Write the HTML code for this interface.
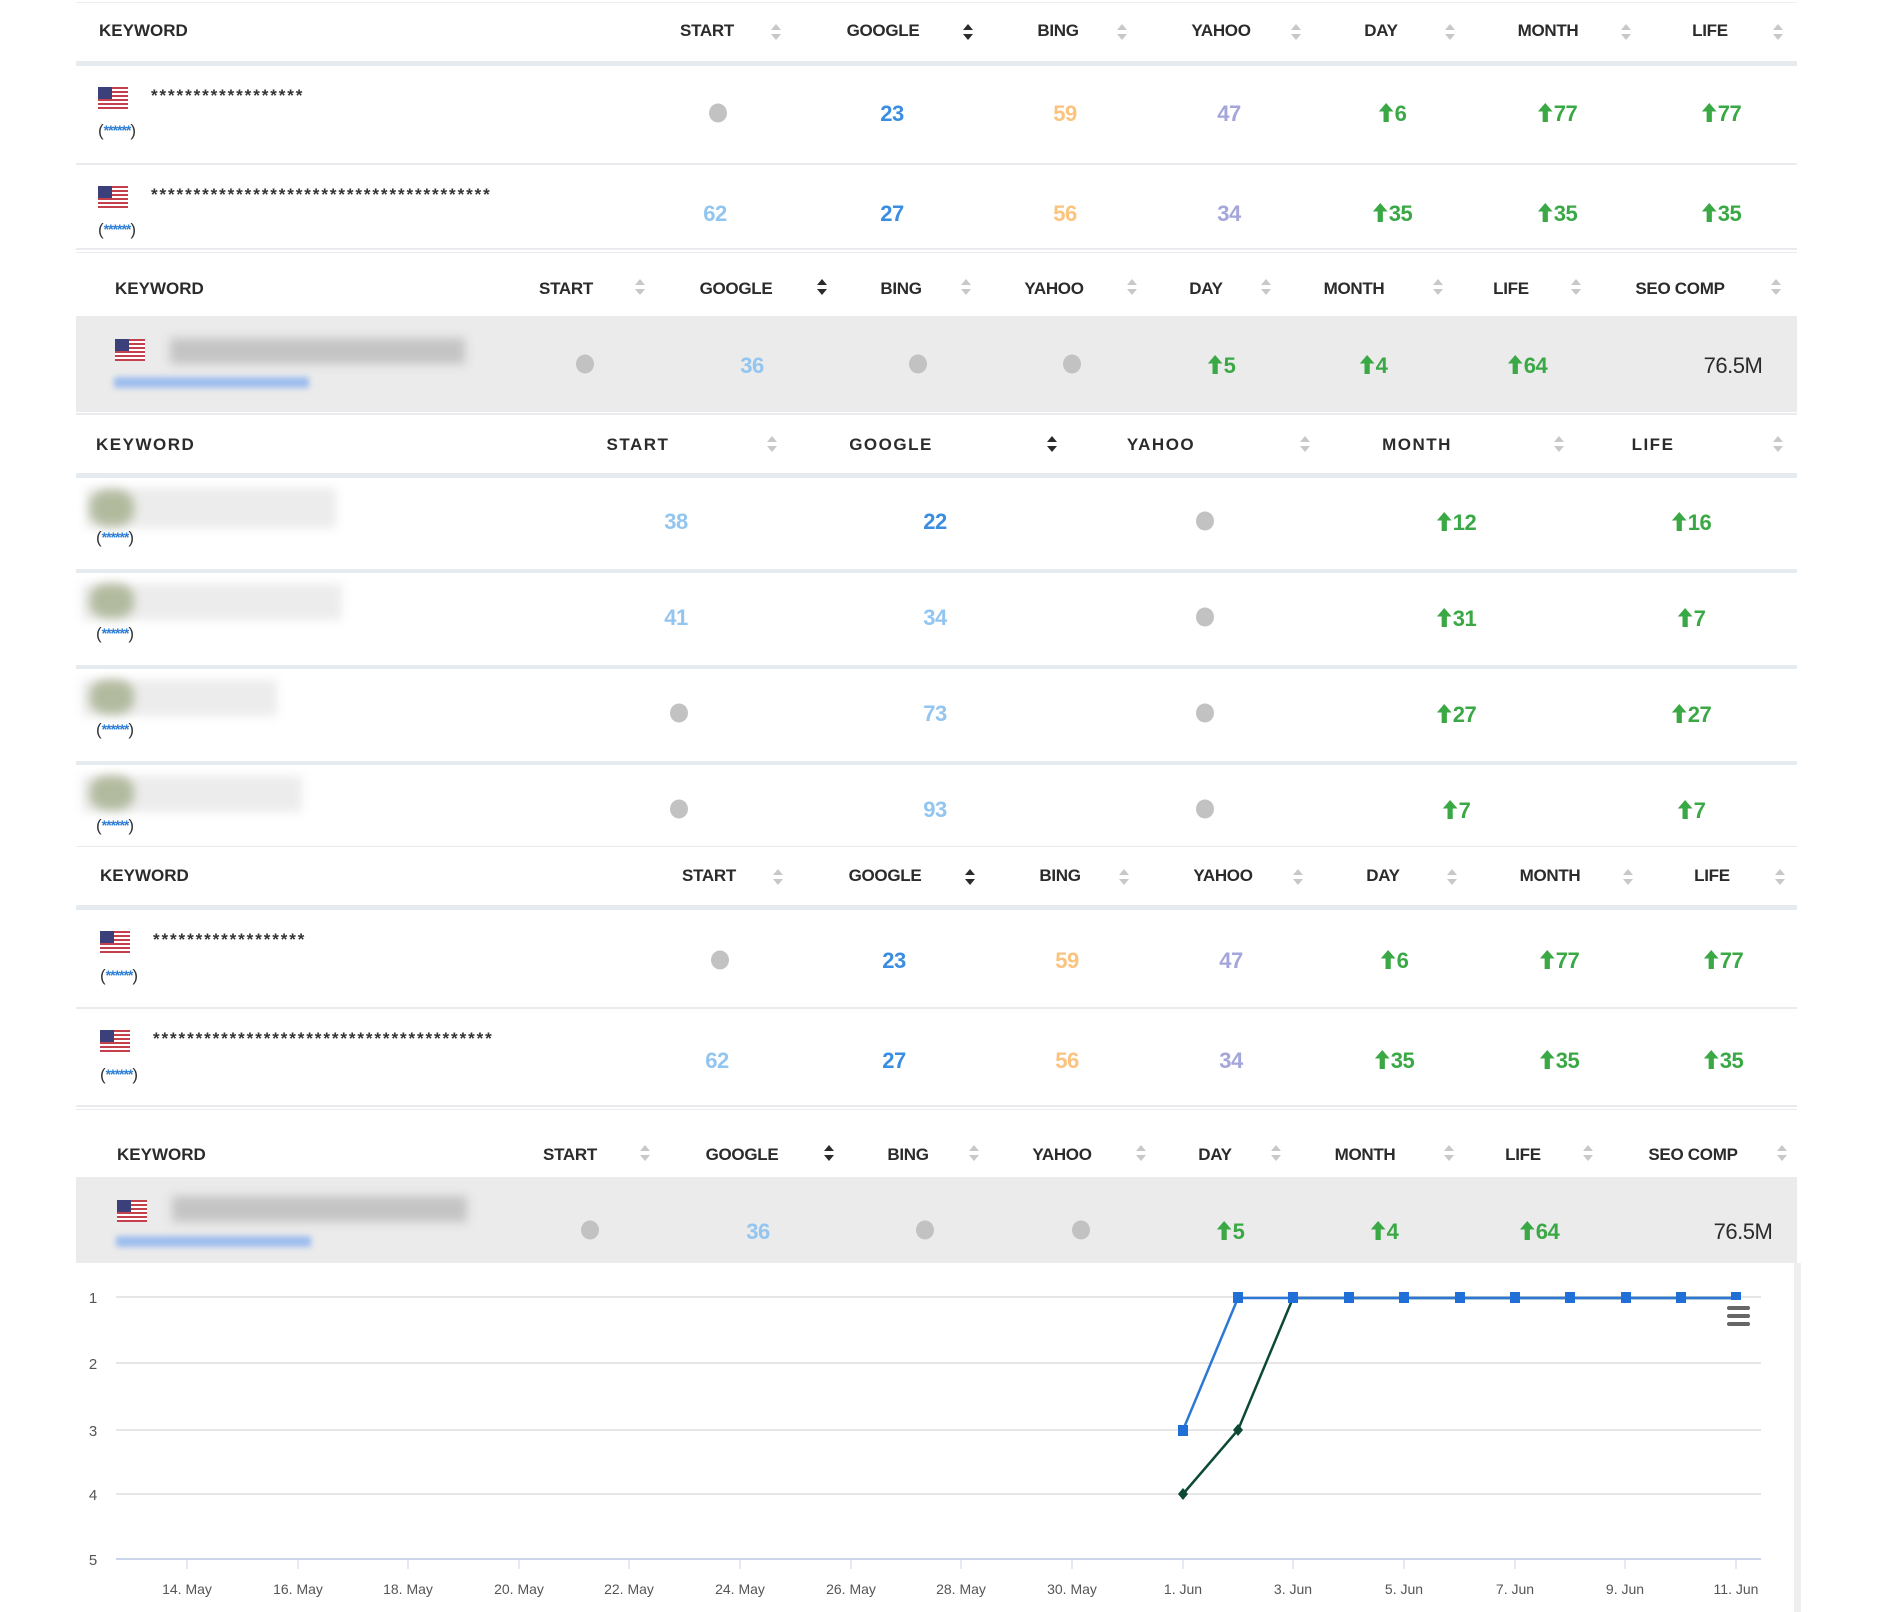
<!DOCTYPE html>
<html><head><meta charset="utf-8"><style>
*{margin:0;padding:0;box-sizing:border-box}
body{width:1882px;height:1612px;background:#fff;position:relative;overflow:hidden;font-family:"Liberation Sans",sans-serif;color:#333}
.a{position:absolute}
.h{position:absolute;transform:translate(-50%,-50%);font-weight:bold;font-size:17px;color:#2b2b2b;white-space:nowrap;letter-spacing:-0.3px}
.hk{position:absolute;transform:translateY(-50%);font-weight:bold;font-size:17px;color:#2b2b2b}
.n{position:absolute;transform:translate(-50%,-50%);font-weight:bold;font-size:22px;white-space:nowrap;letter-spacing:-0.5px;margin-left:-3px}
.g{color:#3aa845}.b1{color:#3a8de0}.b2{color:#92c5ef}.o{color:#fbc37d}.p{color:#a4a6db}
.d{position:absolute;width:18px;height:19px;border-radius:50%;background:#c2c2c2;transform:translate(-50%,-50%)}
.s{position:absolute;transform:translate(-50%,-50%);width:10px;height:16px}
.s:before{content:"";position:absolute;left:0;top:0;border-left:5px solid transparent;border-right:5px solid transparent;border-bottom:6px solid #c8c8c8}
.s:after{content:"";position:absolute;left:0;bottom:0;border-left:5px solid transparent;border-right:5px solid transparent;border-top:6px solid #c8c8c8}
.s.k:before{border-bottom-color:#2b2b2b}.s.k:after{border-top-color:#2b2b2b}
.line{position:absolute;left:76px;width:1721px;height:2px;background:#e9ebee}
.hl{position:absolute;left:76px;width:1721px;height:5px;background:#e6ebf0}
.ast{position:absolute;font-weight:bold;font-size:17px;letter-spacing:1.9px;color:#333;transform:translateY(-40%)}
.par{position:absolute;font-size:17px;color:#333;transform:translateY(-50%)}
.par span{color:#2f7fd4;font-size:14px;font-weight:bold;letter-spacing:-1px;vertical-align:1px}
.fl{position:absolute;width:30px;height:22px}
.gray{position:absolute;left:76px;width:1721px;background:#ebebeb}
.blur{position:absolute;filter:blur(5px)}
</style></head><body>

<svg width="0" height="0" style="position:absolute"><defs>
<symbol id="f" viewBox="0 0 30 22"><rect width="30" height="22" fill="#fff"/>
<g fill="#c4404c"><rect y="0" width="30" height="2"/><rect y="4" width="30" height="2"/><rect y="8" width="30" height="2"/><rect y="12" width="30" height="2"/><rect y="16" width="30" height="2"/><rect y="20" width="30" height="2"/></g>
<rect width="14" height="12" fill="#3b3f7a"/></symbol>
<symbol id="u" viewBox="0 0 16 20"><path d="M8 1 L15 9 L10.5 9 L10.5 19 L5.5 19 L5.5 9 L1 9 Z" fill="#3aa845"/></symbol>
</defs></svg>

<!-- ============ TABLE 1 ============ -->
<div class="a" style="left:76px;top:2px;width:1721px;height:1px;background:#eee"></div>
<div class="hk" style="left:99px;top:31px">KEYWORD</div>
<div class="h" style="left:707px;top:31px">START</div><div class="s" style="left:776px;top:32px"></div>
<div class="h" style="left:883px;top:31px">GOOGLE</div><div class="s k" style="left:968px;top:32px"></div>
<div class="h" style="left:1058px;top:31px">BING</div><div class="s" style="left:1122px;top:32px"></div>
<div class="h" style="left:1221px;top:31px">YAHOO</div><div class="s" style="left:1296px;top:32px"></div>
<div class="h" style="left:1381px;top:31px">DAY</div><div class="s" style="left:1450px;top:32px"></div>
<div class="h" style="left:1548px;top:31px">MONTH</div><div class="s" style="left:1626px;top:32px"></div>
<div class="h" style="left:1710px;top:31px">LIFE</div><div class="s" style="left:1778px;top:32px"></div>
<div class="hl" style="top:61px"></div>

<svg class="fl" style="left:98px;top:87px"><use href="#f"/></svg>
<div class="ast" style="left:151px;top:94px">******************</div>
<div class="par" style="left:98px;top:131px">(<span>******</span>)</div>
<div class="d" style="left:718px;top:113px"></div>
<div class="n b1" style="left:895px;top:114px">23</div>
<div class="n o" style="left:1068px;top:114px">59</div>
<div class="n p" style="left:1232px;top:114px">47</div>
<div class="n g" style="left:1395px;top:114px"><svg width="17" height="21" style="vertical-align:-2px"><use href="#u"/></svg>6</div>
<div class="n g" style="left:1560px;top:114px"><svg width="17" height="21" style="vertical-align:-2px"><use href="#u"/></svg>77</div>
<div class="n g" style="left:1724px;top:114px"><svg width="17" height="21" style="vertical-align:-2px"><use href="#u"/></svg>77</div>
<div class="line" style="top:163px"></div>

<svg class="fl" style="left:98px;top:186px"><use href="#f"/></svg>
<div class="ast" style="left:151px;top:193px">****************************************</div>
<div class="par" style="left:98px;top:230px">(<span>******</span>)</div>
<div class="n b2" style="left:718px;top:214px">62</div>
<div class="n b1" style="left:895px;top:214px">27</div>
<div class="n o" style="left:1068px;top:214px">56</div>
<div class="n p" style="left:1232px;top:214px">34</div>
<div class="n g" style="left:1395px;top:214px"><svg width="17" height="21" style="vertical-align:-2px"><use href="#u"/></svg>35</div>
<div class="n g" style="left:1560px;top:214px"><svg width="17" height="21" style="vertical-align:-2px"><use href="#u"/></svg>35</div>
<div class="n g" style="left:1724px;top:214px"><svg width="17" height="21" style="vertical-align:-2px"><use href="#u"/></svg>35</div>
<div class="line" style="top:248px"></div>
<div class="line" style="top:252px;height:1px"></div>

<!-- ============ TABLE 2 ============ -->
<div class="hk" style="left:115px;top:289px">KEYWORD</div>
<div class="h" style="left:566px;top:289px">START</div><div class="s" style="left:640px;top:287px"></div>
<div class="h" style="left:736px;top:289px">GOOGLE</div><div class="s k" style="left:822px;top:287px"></div>
<div class="h" style="left:901px;top:289px">BING</div><div class="s" style="left:966px;top:287px"></div>
<div class="h" style="left:1054px;top:289px">YAHOO</div><div class="s" style="left:1132px;top:287px"></div>
<div class="h" style="left:1206px;top:289px">DAY</div><div class="s" style="left:1266px;top:287px"></div>
<div class="h" style="left:1354px;top:289px">MONTH</div><div class="s" style="left:1438px;top:287px"></div>
<div class="h" style="left:1511px;top:289px">LIFE</div><div class="s" style="left:1576px;top:287px"></div>
<div class="h" style="left:1680px;top:289px">SEO COMP</div><div class="s" style="left:1776px;top:287px"></div>
<div class="gray" style="top:316px;height:96px"></div>
<svg class="fl" style="left:115px;top:339px"><use href="#f"/></svg>
<div class="blur" style="left:170px;top:338px;width:295px;height:26px;background:#c4c4c4"></div>
<div class="blur" style="left:114px;top:377px;width:195px;height:11px;background:#9dbdee;filter:blur(3px)"></div>
<div class="d" style="left:585px;top:364px"></div>
<div class="n b2" style="left:755px;top:366px">36</div>
<div class="d" style="left:918px;top:364px"></div>
<div class="d" style="left:1072px;top:364px"></div>
<div class="n g" style="left:1224px;top:366px"><svg width="17" height="21" style="vertical-align:-2px"><use href="#u"/></svg>5</div>
<div class="n g" style="left:1376px;top:366px"><svg width="17" height="21" style="vertical-align:-2px"><use href="#u"/></svg>4</div>
<div class="n g" style="left:1530px;top:366px"><svg width="17" height="21" style="vertical-align:-2px"><use href="#u"/></svg>64</div>
<div class="n" style="left:1736px;top:366px;font-weight:normal;color:#2b2b2b">76.5M</div>
<div class="line" style="top:413px"></div>

<!-- ============ TABLE 3 ============ -->
<div class="hk" style="left:96px;top:445px;letter-spacing:1.5px">KEYWORD</div>
<div class="h" style="left:638px;top:445px;letter-spacing:1.5px">START</div><div class="s" style="left:772px;top:444px"></div>
<div class="h" style="left:891px;top:445px;letter-spacing:1.5px">GOOGLE</div><div class="s k" style="left:1052px;top:444px"></div>
<div class="h" style="left:1161px;top:445px;letter-spacing:1.5px">YAHOO</div><div class="s" style="left:1305px;top:444px"></div>
<div class="h" style="left:1417px;top:445px;letter-spacing:1.5px">MONTH</div><div class="s" style="left:1559px;top:444px"></div>
<div class="h" style="left:1653px;top:445px;letter-spacing:1.5px">LIFE</div><div class="s" style="left:1778px;top:444px"></div>
<div class="hl" style="top:473px"></div>

<div class="blur" style="left:86px;top:488px;width:250px;height:40px;background:#ececec"></div>
<div class="blur" style="left:90px;top:490px;width:44px;height:36px;background:#b2ba9e;border-radius:40%"></div>
<div class="par" style="left:96px;top:538px">(<span>******</span>)</div>
<div class="n b2" style="left:679px;top:522px">38</div>
<div class="n b1" style="left:938px;top:522px">22</div>
<div class="d" style="left:1205px;top:521px"></div>
<div class="n g" style="left:1459px;top:523px"><svg width="17" height="21" style="vertical-align:-2px"><use href="#u"/></svg>12</div>
<div class="n g" style="left:1694px;top:523px"><svg width="17" height="21" style="vertical-align:-2px"><use href="#u"/></svg>16</div>
<div class="hl" style="top:569px;height:4px"></div>

<div class="blur" style="left:82px;top:584px;width:260px;height:36px;background:#ececec"></div>
<div class="blur" style="left:90px;top:584px;width:44px;height:34px;background:#b2ba9e;border-radius:40%"></div>
<div class="par" style="left:96px;top:634px">(<span>******</span>)</div>
<div class="n b2" style="left:679px;top:618px">41</div>
<div class="n b2" style="left:938px;top:618px">34</div>
<div class="d" style="left:1205px;top:617px"></div>
<div class="n g" style="left:1459px;top:619px"><svg width="17" height="21" style="vertical-align:-2px"><use href="#u"/></svg>31</div>
<div class="n g" style="left:1694px;top:619px"><svg width="17" height="21" style="vertical-align:-2px"><use href="#u"/></svg>7</div>
<div class="hl" style="top:665px;height:4px"></div>

<div class="blur" style="left:82px;top:680px;width:195px;height:36px;background:#ececec"></div>
<div class="blur" style="left:90px;top:680px;width:44px;height:34px;background:#b2ba9e;border-radius:40%"></div>
<div class="par" style="left:96px;top:730px">(<span>******</span>)</div>
<div class="d" style="left:679px;top:713px"></div>
<div class="n b2" style="left:938px;top:714px">73</div>
<div class="d" style="left:1205px;top:713px"></div>
<div class="n g" style="left:1459px;top:715px"><svg width="17" height="21" style="vertical-align:-2px"><use href="#u"/></svg>27</div>
<div class="n g" style="left:1694px;top:715px"><svg width="17" height="21" style="vertical-align:-2px"><use href="#u"/></svg>27</div>
<div class="hl" style="top:761px;height:4px"></div>

<div class="blur" style="left:82px;top:776px;width:220px;height:36px;background:#ececec"></div>
<div class="blur" style="left:90px;top:776px;width:44px;height:34px;background:#b2ba9e;border-radius:40%"></div>
<div class="par" style="left:96px;top:826px">(<span>******</span>)</div>
<div class="d" style="left:679px;top:809px"></div>
<div class="n b2" style="left:938px;top:810px">93</div>
<div class="d" style="left:1205px;top:809px"></div>
<div class="n g" style="left:1459px;top:811px"><svg width="17" height="21" style="vertical-align:-2px"><use href="#u"/></svg>7</div>
<div class="n g" style="left:1694px;top:811px"><svg width="17" height="21" style="vertical-align:-2px"><use href="#u"/></svg>7</div>
<div class="line" style="top:846px;height:1px"></div>

<!-- ============ TABLE 4 ============ -->
<div class="hk" style="left:100px;top:876px">KEYWORD</div>
<div class="h" style="left:709px;top:876px">START</div><div class="s" style="left:778px;top:877px"></div>
<div class="h" style="left:885px;top:876px">GOOGLE</div><div class="s k" style="left:970px;top:877px"></div>
<div class="h" style="left:1060px;top:876px">BING</div><div class="s" style="left:1124px;top:877px"></div>
<div class="h" style="left:1223px;top:876px">YAHOO</div><div class="s" style="left:1298px;top:877px"></div>
<div class="h" style="left:1383px;top:876px">DAY</div><div class="s" style="left:1452px;top:877px"></div>
<div class="h" style="left:1550px;top:876px">MONTH</div><div class="s" style="left:1628px;top:877px"></div>
<div class="h" style="left:1712px;top:876px">LIFE</div><div class="s" style="left:1780px;top:877px"></div>
<div class="hl" style="top:905px"></div>

<svg class="fl" style="left:100px;top:931px"><use href="#f"/></svg>
<div class="ast" style="left:153px;top:938px">******************</div>
<div class="par" style="left:100px;top:976px">(<span>******</span>)</div>
<div class="d" style="left:720px;top:960px"></div>
<div class="n b1" style="left:897px;top:961px">23</div>
<div class="n o" style="left:1070px;top:961px">59</div>
<div class="n p" style="left:1234px;top:961px">47</div>
<div class="n g" style="left:1397px;top:961px"><svg width="17" height="21" style="vertical-align:-2px"><use href="#u"/></svg>6</div>
<div class="n g" style="left:1562px;top:961px"><svg width="17" height="21" style="vertical-align:-2px"><use href="#u"/></svg>77</div>
<div class="n g" style="left:1726px;top:961px"><svg width="17" height="21" style="vertical-align:-2px"><use href="#u"/></svg>77</div>
<div class="line" style="top:1007px"></div>

<svg class="fl" style="left:100px;top:1030px"><use href="#f"/></svg>
<div class="ast" style="left:153px;top:1037px">****************************************</div>
<div class="par" style="left:100px;top:1075px">(<span>******</span>)</div>
<div class="n b2" style="left:720px;top:1061px">62</div>
<div class="n b1" style="left:897px;top:1061px">27</div>
<div class="n o" style="left:1070px;top:1061px">56</div>
<div class="n p" style="left:1234px;top:1061px">34</div>
<div class="n g" style="left:1397px;top:1061px"><svg width="17" height="21" style="vertical-align:-2px"><use href="#u"/></svg>35</div>
<div class="n g" style="left:1562px;top:1061px"><svg width="17" height="21" style="vertical-align:-2px"><use href="#u"/></svg>35</div>
<div class="n g" style="left:1726px;top:1061px"><svg width="17" height="21" style="vertical-align:-2px"><use href="#u"/></svg>35</div>
<div class="line" style="top:1105px"></div>
<div class="line" style="top:1109px;height:1px"></div>

<!-- ============ TABLE 5 ============ -->
<div class="hk" style="left:117px;top:1155px">KEYWORD</div>
<div class="h" style="left:570px;top:1155px">START</div><div class="s" style="left:645px;top:1153px"></div>
<div class="h" style="left:742px;top:1155px">GOOGLE</div><div class="s k" style="left:829px;top:1153px"></div>
<div class="h" style="left:908px;top:1155px">BING</div><div class="s" style="left:974px;top:1153px"></div>
<div class="h" style="left:1062px;top:1155px">YAHOO</div><div class="s" style="left:1141px;top:1153px"></div>
<div class="h" style="left:1215px;top:1155px">DAY</div><div class="s" style="left:1276px;top:1153px"></div>
<div class="h" style="left:1365px;top:1155px">MONTH</div><div class="s" style="left:1449px;top:1153px"></div>
<div class="h" style="left:1523px;top:1155px">LIFE</div><div class="s" style="left:1588px;top:1153px"></div>
<div class="h" style="left:1693px;top:1155px">SEO COMP</div><div class="s" style="left:1782px;top:1153px"></div>
<div class="gray" style="top:1177px;height:86px"></div>
<svg class="fl" style="left:117px;top:1200px"><use href="#f"/></svg>
<div class="blur" style="left:172px;top:1196px;width:295px;height:26px;background:#c4c4c4"></div>
<div class="blur" style="left:116px;top:1236px;width:195px;height:11px;background:#9dbdee;filter:blur(3px)"></div>
<div class="d" style="left:590px;top:1230px"></div>
<div class="n b2" style="left:761px;top:1232px">36</div>
<div class="d" style="left:925px;top:1230px"></div>
<div class="d" style="left:1081px;top:1230px"></div>
<div class="n g" style="left:1233px;top:1232px"><svg width="17" height="21" style="vertical-align:-2px"><use href="#u"/></svg>5</div>
<div class="n g" style="left:1387px;top:1232px"><svg width="17" height="21" style="vertical-align:-2px"><use href="#u"/></svg>4</div>
<div class="n g" style="left:1542px;top:1232px"><svg width="17" height="21" style="vertical-align:-2px"><use href="#u"/></svg>64</div>
<div class="n" style="left:1746px;top:1232px;font-weight:normal;color:#2b2b2b">76.5M</div>

<!-- ============ CHART ============ -->
<div class="a" style="left:1794px;top:1263px;width:7px;height:349px;background:#efefef"></div>
<svg class="a" style="left:0;top:0" width="1882" height="1612">
<g stroke="#e6e6e6" stroke-width="2">
<line x1="116" y1="1297" x2="1761" y2="1297"/>
<line x1="116" y1="1363" x2="1761" y2="1363"/>
<line x1="116" y1="1430" x2="1761" y2="1430"/>
<line x1="116" y1="1494" x2="1761" y2="1494"/>
</g>
<line x1="116" y1="1559" x2="1761" y2="1559" stroke="#ccd6eb" stroke-width="2"/>
<g stroke="#ccd6eb" stroke-width="1">
<line x1="187" y1="1559" x2="187" y2="1569"/><line x1="298" y1="1559" x2="298" y2="1569"/><line x1="408" y1="1559" x2="408" y2="1569"/><line x1="519" y1="1559" x2="519" y2="1569"/><line x1="629" y1="1559" x2="629" y2="1569"/><line x1="740" y1="1559" x2="740" y2="1569"/><line x1="851" y1="1559" x2="851" y2="1569"/><line x1="961" y1="1559" x2="961" y2="1569"/><line x1="1072" y1="1559" x2="1072" y2="1569"/><line x1="1183" y1="1559" x2="1183" y2="1569"/><line x1="1293" y1="1559" x2="1293" y2="1569"/><line x1="1404" y1="1559" x2="1404" y2="1569"/><line x1="1515" y1="1559" x2="1515" y2="1569"/><line x1="1625" y1="1559" x2="1625" y2="1569"/><line x1="1736" y1="1559" x2="1736" y2="1569"/>
</g>
<g font-family="Liberation Sans" font-size="14" fill="#555" text-anchor="middle">
<text x="187" y="1594">14. May</text><text x="298" y="1594">16. May</text><text x="408" y="1594">18. May</text><text x="519" y="1594">20. May</text><text x="629" y="1594">22. May</text><text x="740" y="1594">24. May</text><text x="851" y="1594">26. May</text><text x="961" y="1594">28. May</text><text x="1072" y="1594">30. May</text><text x="1183" y="1594">1. Jun</text><text x="1293" y="1594">3. Jun</text><text x="1404" y="1594">5. Jun</text><text x="1515" y="1594">7. Jun</text><text x="1625" y="1594">9. Jun</text><text x="1736" y="1594">11. Jun</text>
</g>
<g font-family="Liberation Sans" font-size="15" fill="#555" text-anchor="middle">
<text x="93" y="1303">1</text><text x="93" y="1369">2</text><text x="93" y="1436">3</text><text x="93" y="1500">4</text><text x="93" y="1565">5</text>
</g>
<polyline points="1183,1494 1238,1430 1293,1298 1736,1298" fill="none" stroke="#0d4a36" stroke-width="2.5"/>
<g fill="#0d4a36"><path d="M1183 1488 L1188 1494 L1183 1500 L1178 1494Z"/><path d="M1238 1424 L1243 1430 L1238 1436 L1233 1430Z"/></g>
<polyline points="1183,1430 1238,1298 1736,1298" fill="none" stroke="#2d78d6" stroke-width="2.5"/>
<g fill="#1f6fd6">
<rect x="1178" y="1425" width="10" height="11"/>
<rect x="1233" y="1292" width="10" height="11"/><rect x="1288" y="1292" width="10" height="11"/><rect x="1344" y="1292" width="10" height="11"/><rect x="1399" y="1292" width="10" height="11"/><rect x="1455" y="1292" width="10" height="11"/><rect x="1510" y="1292" width="10" height="11"/><rect x="1565" y="1292" width="10" height="11"/><rect x="1621" y="1292" width="10" height="11"/><rect x="1676" y="1292" width="10" height="11"/><rect x="1731" y="1292" width="10" height="8"/>
</g>
<g fill="#666"><rect x="1727" y="1306" width="23" height="4" rx="2"/><rect x="1727" y="1314" width="23" height="4" rx="2"/><rect x="1727" y="1322" width="23" height="4" rx="2"/></g>
</svg>
</body></html>
